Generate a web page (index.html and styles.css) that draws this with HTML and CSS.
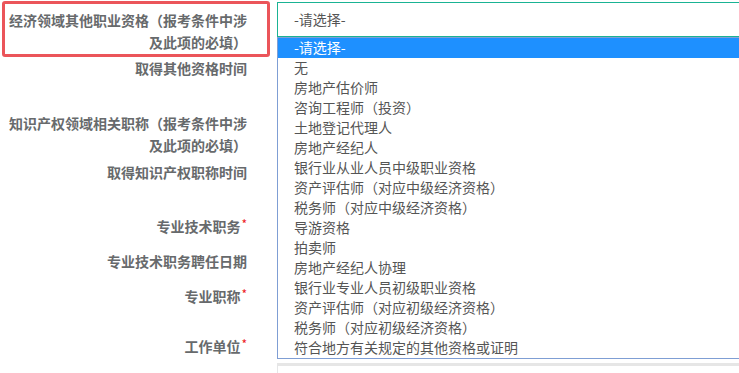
FILE: index.html
```html
<!DOCTYPE html>
<html lang="zh-CN">
<head>
<meta charset="utf-8">
<title>表单</title>
<link rel="stylesheet" href="styles.css">
</head>
<body>
<div class="page">
  <form class="form">
    <div class="row r1">
      <div class="label-wrap highlighted">
        <label class="label">经济领域其他职业资格（报考条件中涉及此项的必填）</label>
      </div>
      <div class="field">
        <div class="select">-请选择-</div>
      </div>
    </div>
    <div class="row r2">
      <div class="label-wrap"><label class="label">取得其他资格时间</label></div>
      <div class="field"><div class="input"></div></div>
    </div>
    <div class="row r3">
      <div class="label-wrap"><label class="label">知识产权领域相关职称（报考条件中涉及此项的必填）</label></div>
      <div class="field"><div class="input"></div></div>
    </div>
    <div class="row r4">
      <div class="label-wrap"><label class="label">取得知识产权职称时间</label></div>
      <div class="field"><div class="input"></div></div>
    </div>
    <div class="row r5">
      <div class="label-wrap"><label class="label">专业技术职务<span class="req">*</span></label></div>
      <div class="field"><div class="input"></div></div>
    </div>
    <div class="row r6">
      <div class="label-wrap"><label class="label">专业技术职务聘任日期</label></div>
      <div class="field"><div class="input"></div></div>
    </div>
    <div class="row r7">
      <div class="label-wrap"><label class="label">专业职称<span class="req">*</span></label></div>
      <div class="field"><div class="input"></div></div>
    </div>
    <div class="row r8">
      <div class="label-wrap"><label class="label">工作单位<span class="req">*</span></label></div>
      <div class="field"><div class="input last"></div></div>
    </div>
  </form>

  <ul class="dropdown">
    <li class="opt active">-请选择-</li>
    <li class="opt">无</li>
    <li class="opt">房地产估价师</li>
    <li class="opt">咨询工程师（投资）</li>
    <li class="opt">土地登记代理人</li>
    <li class="opt">房地产经纪人</li>
    <li class="opt">银行业从业人员中级职业资格</li>
    <li class="opt">资产评估师（对应中级经济资格）</li>
    <li class="opt">税务师（对应中级经济资格）</li>
    <li class="opt">导游资格</li>
    <li class="opt">拍卖师</li>
    <li class="opt">房地产经纪人协理</li>
    <li class="opt">银行业专业人员初级职业资格</li>
    <li class="opt">资产评估师（对应初级经济资格）</li>
    <li class="opt">税务师（对应初级经济资格）</li>
    <li class="opt">符合地方有关规定的其他资格或证明</li>
  </ul>
</div>
</body>
</html>
```

FILE: styles.css
```css
html, body {
  margin: 0;
  padding: 0;
  background: #ffffff;
  overflow: hidden;
}

body {
  width: 739px;
  height: 373px;
  font-family: "Noto Sans CJK SC", "Noto Sans", "DejaVu Sans", sans-serif;
  font-size: 14px;
  color: #676a6c;
}

.page {
  position: relative;
  width: 739px;
  height: 373px;
  overflow: hidden;
}

.form {
  padding-top: 2px;
}

.row {
  display: flex;
  align-items: flex-start;
}

.r1 { height: 48px; }
.r2 { height: 55px; }
.r3 { height: 49px; }
.r4 { height: 52px; }
.r5 { height: 37px; }
.r6 { height: 33px; }
.r7 { height: 50px; }
.r8 { height: 60px; }

.label-wrap {
  margin-left: 7px;
  width: 240px;
  flex: none;
  text-align: right;
  padding-top: 7px;
  position: relative;
}

.highlighted::before {
  content: "";
  position: absolute;
  left: -5px;
  top: -1px;
  width: 262px;
  height: 50px;
  border: 3px solid #e9474c;
  border-radius: 3px;
  opacity: 0.92;
}

.label {
  display: block;
  font-weight: bold;
  line-height: 22px;
  color: #676a6c;
}

.req {
  color: #ed1c24;
  font-size: 12px;
  font-weight: normal;
  vertical-align: 3px;
  margin-left: 1px;
}

.field {
  margin-left: 30px;
  width: 520px;
  flex: none;
}

.select {
  box-sizing: border-box;
  height: 35px;
  border: 1px solid #1ab394;
  padding-left: 16px;
  line-height: 33px;
  color: #555555;
  background: #ffffff;
}

.input {
  box-sizing: border-box;
  height: 34px;
  border: 1px solid #e5e6e7;
}

.input.last {
  margin-top: 37px;
  height: 40px;
  border-top: 3px solid #e6e6e6;
}

.dropdown {
  position: absolute;
  left: 277px;
  top: 37px;
  width: 520px;
  margin: 0;
  padding: 0;
  list-style: none;
  background: #ffffff;
  border: 1px solid #7f9ed4;
}

.opt {
  height: 20px;
  line-height: 18px;
  padding-left: 16px;
  color: #555555;
  white-space: nowrap;
}

.opt.active {
  background: #1e90ff;
  color: #ffffff;
}
```
